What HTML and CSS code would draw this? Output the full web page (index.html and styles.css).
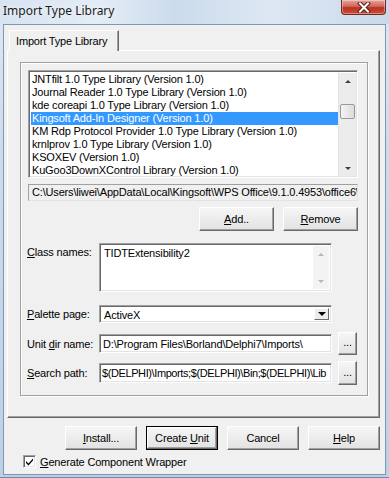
FILE: index.html
```html
<html>

<head>
    <link rel="stylesheet" href="styles.css">
</head>

<body>
    <div class="window">
        <div class="titlebar">
            <span class="title">Import Type Library</span>
            <div class="close">
                <svg width="14" height="11" viewBox="0 0 14 11">
                    <path d="M3 1.5 L11 9.5 M11 1.5 L3 9.5" stroke="#5a1c17" stroke-width="4" stroke-linecap="square" />
                    <path d="M3 1.5 L11 9.5 M11 1.5 L3 9.5" stroke="#ffffff" stroke-width="2" stroke-linecap="square" />
                </svg>
            </div>
        </div>

        <div class="client">
            <div class="tabs">
                <div class="tab">Import Type Library</div>
            </div>

            <div class="panel">
                <div class="group">
                    <div class="listbox">
                        <div class="items">
                            <div class="item">JNTfilt 1.0 Type Library (Version 1.0)</div>
                            <div class="item">Journal Reader 1.0 Type Library (Version 1.0)</div>
                            <div class="item">kde coreapi 1.0 Type Library (Version 1.0)</div>
                            <div class="item selected">Kingsoft Add-In Designer (Version 1.0)</div>
                            <div class="item">KM Rdp Protocol Provider 1.0 Type Library (Version 1.0)</div>
                            <div class="item">krnlprov 1.0 Type Library (Version 1.0)</div>
                            <div class="item">KSOXEV (Version 1.0)</div>
                            <div class="item">KuGoo3DownXControl Library (Version 1.0)</div>
                        </div>
                        <div class="vscroll">
                            <div class="arrow up"></div>
                            <div class="track"><div class="thumb"></div></div>
                            <div class="arrow down"></div>
                        </div>
                    </div>

                    <div class="pathbox">C:\Users\liwei\AppData\Local\Kingsoft\WPS Office\9.1.0.4953\office6\kwpsaddin.dll</div>

                    <div class="btnrow">
                        <div class="button"><span><u>A</u>dd..</span></div>
                        <div class="button"><span><u>R</u>emove</span></div>
                    </div>

                    <div class="row row-class">
                        <div class="label"><u>C</u>lass names:</div>
                        <div class="memo">
                            <div class="memo-text">TIDTExtensibility2</div>
                            <div class="vscroll disabled">
                                <div class="arrow up"></div>
                                <div class="track"></div>
                                <div class="arrow down"></div>
                            </div>
                        </div>
                    </div>

                    <div class="row row-palette">
                        <div class="label"><u>P</u>alette page:</div>
                        <div class="combo">
                            <div class="combo-text">ActiveX</div>
                            <div class="combo-btn"><div class="arrow down"></div></div>
                        </div>
                    </div>

                    <div class="row row-unit">
                        <div class="label">Unit <u>d</u>ir name:</div>
                        <div class="edit">D:\Program Files\Borland\Delphi7\Imports\</div>
                        <div class="button dots"><span>...</span></div>
                    </div>

                    <div class="row row-search">
                        <div class="label"><u>S</u>earch path:</div>
                        <div class="edit">$(DELPHI)\Imports;$(DELPHI)\Bin;$(DELPHI)\Lib</div>
                        <div class="button dots"><span>...</span></div>
                    </div>
                </div>
            </div>

            <div class="actions">
                <div class="button wide"><span><u>I</u>nstall...</span></div>
                <div class="button wide default"><span>Create <u>U</u>nit</span></div>
                <div class="button wide"><span>Cancel</span></div>
                <div class="button wide"><span><u>H</u>elp</span></div>
            </div>

            <div class="check">
                <div class="checkbox">
                    <svg width="9" height="9" viewBox="0 0 9 9">
                        <path d="M1 4 L3.5 6.5 L8 1.5 L8 3.5 L3.5 8.5 L1 6 Z" fill="#000" />
                    </svg>
                </div>
                <span><u>G</u>enerate Component Wrapper</span>
            </div>
        </div>
    </div>
</body>

</html>
```

FILE: styles.css
```css
body {
    margin: 0;
    background: #bfd2e8;
    font-family: "Liberation Sans", Arial, sans-serif;
    font-size: 11px;
    letter-spacing: -0.17px;
    color: #000;
}

.window {
    width: 389px;
    height: 478px;
    box-sizing: border-box;
    padding: 0 3px 3px 3px;
    background: linear-gradient(180deg, #dce8f4 0%, #cddced 30%, #bcd0e6 100%);
    border-bottom: 1px solid #6f8aa8;
    overflow: hidden;
}

/* title bar */

.titlebar {
    height: 24px;
    display: flex;
    align-items: flex-start;
    justify-content: space-between;
    margin: 0 -3px;
    background: linear-gradient(90deg, #d6e3f1 0%, #e4edf6 25%, #cbdbec 45%, #dde8f3 70%, #c9d9eb 100%);
}

.title {
    font-family: "Noto Sans", "Open Sans", sans-serif;
    font-size: 12px;
    letter-spacing: 0;
    color: #1b1b1b;
    margin: 2px 0 0 3px;
    text-shadow: 0 0 6px #ffffff;
}

.close {
    width: 45px;
    height: 15px;
    margin-right: 3px;
    box-sizing: border-box;
    border: 1px solid #6e2a24;
    border-top: none;
    border-radius: 0 0 4px 4px;
    background: linear-gradient(180deg, #e6a59a 0%, #d0675a 45%, #b83222 55%, #d14c36 100%);
    box-shadow: inset 0 0 0 1px rgba(255, 255, 255, 0.35);
    display: flex;
    align-items: center;
    justify-content: center;
}

/* client */

.client {
    height: 451px;
    box-sizing: border-box;
    background: #f0f0f0;
    border: 1px solid #8197b0;
    padding: 5px 5px 0 3px;
}

.tabs {
    display: flex;
    height: 20px;
}

.tab {
    margin-left: 2px;
    width: 110px;
    height: 21px;
    box-sizing: border-box;
    padding: 4px 0 0 6px;
    background: #f0f0f0;
    border-top: 1px solid #ffffff;
    border-left: 1px solid #ffffff;
    border-right: 1px solid #696969;
    box-shadow: inset -1px 0 0 #a0a0a0;
    position: relative;
    z-index: 1;
    white-space: nowrap;
}

.panel {
    width: 373px;
    height: 368px;
    box-sizing: border-box;
    border-top: 1px solid #ffffff;
    border-left: 1px solid #ffffff;
    border-right: 1px solid #696969;
    border-bottom: 1px solid #696969;
    box-shadow: inset -1px -1px 0 #a0a0a0;
    padding: 11px 0 0 12px;
}

.group {
    width: 348px;
    height: 334px;
    box-sizing: border-box;
    border: 1px solid #a0a0a0;
    box-shadow: inset 1px 1px 0 #ffffff, 1px 1px 0 #ffffff;
    padding: 7px 9px 0 7px;
}

/* sunken controls */

.listbox,
.memo,
.combo,
.edit {
    box-sizing: border-box;
    background: #ffffff;
    border-top: 1px solid #a0a0a0;
    border-left: 1px solid #a0a0a0;
    border-right: 1px solid #ffffff;
    border-bottom: 1px solid #ffffff;
    box-shadow: inset 1px 1px 0 #696969, inset -1px -1px 0 #e3e3e3;
}

.listbox {
    height: 108px;
    display: flex;
    padding: 2px 1px 1px 2px;
}

.items {
    flex: 1;
    overflow: hidden;
}

.item {
    height: 13px;
    line-height: 13px;
    padding-left: 1px;
    white-space: nowrap;
}

.item.selected {
    background: #3399ff;
    color: #ffffff;
}

.vscroll {
    width: 17px;
    display: flex;
    flex-direction: column;
    background: #ececec;
    border-left: 1px solid #e4e4e4;
}

.vscroll .arrow {
    height: 16px;
    display: flex;
    align-items: center;
    justify-content: center;
}

.arrow::before {
    content: "";
    display: block;
    width: 0;
    height: 0;
    border-left: 3px solid transparent;
    border-right: 3px solid transparent;
}

.arrow.up::before {
    border-bottom: 3px solid #404040;
}

.arrow.down::before {
    border-top: 3px solid #404040;
}

.vscroll.disabled .arrow.up::before {
    border-bottom-color: #b8b8b8;
}

.vscroll.disabled .arrow.down::before {
    border-top-color: #b8b8b8;
}

.vscroll .track {
    flex: 1;
}

.thumb {
    margin: 15px 0 0 1px;
    width: 15px;
    height: 15px;
    box-sizing: border-box;
    border: 1px solid #9a9a9a;
    border-radius: 2px;
    background: linear-gradient(90deg, #f4f4f4, #dcdcdc);
}

.pathbox {
    margin-top: 6px;
    height: 17px;
    line-height: 15px;
    box-sizing: border-box;
    border: 1px solid #a0a0a0;
    border-right-color: #e3e3e3;
    border-bottom-color: #e3e3e3;
    padding-left: 3px;
    white-space: nowrap;
    overflow: hidden;
}

/* buttons */

.button {
    box-sizing: border-box;
    height: 24px;
    display: flex;
    align-items: center;
    justify-content: center;
    background: linear-gradient(180deg, #f6f6f6 0%, #ececec 50%, #e2e2e2 100%);
    border-top: 1px solid #ffffff;
    border-left: 1px solid #ffffff;
    border-right: 1px solid #696969;
    border-bottom: 1px solid #696969;
    box-shadow: inset -1px -1px 0 #a0a0a0;
    white-space: nowrap;
}

.btnrow {
    margin-top: 6px;
    display: flex;
    justify-content: flex-end;
    gap: 9px;
}

.btnrow .button {
    width: 75px;
}

/* labelled rows */

.row {
    display: flex;
    align-items: center;
}

.label {
    width: 72px;
    margin-left: -1px;
    flex-shrink: 0;
    white-space: nowrap;
}

.row-class {
    margin-top: 12px;
    align-items: flex-start;
}

.row-class .label {
    padding-top: 3px;
}

.memo {
    width: 233px;
    height: 49px;
    display: flex;
    padding: 2px;
}

.memo-text {
    flex: 1;
    padding: 1px 0 0 2px;
}

.memo .vscroll {
    width: 16px;
    background: #f3f3f3;
    border-left: none;
}

.row-palette {
    margin-top: 13px;
}

.combo {
    width: 233px;
    height: 18px;
    display: flex;
    padding: 2px;
}

.combo-text {
    flex: 1;
    line-height: 14px;
    padding-left: 2px;
}

.combo-btn {
    width: 15px;
    box-sizing: border-box;
    display: flex;
    align-items: center;
    justify-content: center;
    background: #ececec;
    border-top: 1px solid #ffffff;
    border-left: 1px solid #ffffff;
    border-right: 1px solid #696969;
    border-bottom: 1px solid #696969;
}

.combo-btn .arrow.down::before {
    border-left-width: 4px;
    border-right-width: 4px;
    border-top: 4px solid #000000;
}

.row-unit {
    margin-top: 9px;
    height: 23px;
}

.row-search {
    margin-top: 6px;
    height: 24px;
}

.edit {
    width: 233px;
    height: 19px;
    line-height: 15px;
    padding: 2px 0 0 3px;
    white-space: nowrap;
    overflow: hidden;
}

.row-search .edit {
    height: 20px;
    padding-left: 2px;
    letter-spacing: -0.4px;
}

.button.dots {
    width: 19px;
    height: 23px;
    margin-left: 6px;
    padding-bottom: 3px;
}

.row-search .button.dots {
    height: 24px;
}

/* bottom area */

.actions {
    margin-top: 8px;
    display: flex;
    justify-content: flex-end;
    gap: 9px;
}

.button.wide {
    width: 72px;
}

.button.default {
    border: 1px solid #000000;
    box-shadow: inset -1px -1px 0 #696969, inset 1px 1px 0 #ffffff, inset -2px -2px 0 #a0a0a0;
}

.check {
    margin: 5px 0 0 16px;
    display: flex;
    align-items: center;
    height: 13px;
}

.checkbox {
    width: 13px;
    height: 13px;
    box-sizing: border-box;
    background: #ffffff;
    border-top: 1px solid #a0a0a0;
    border-left: 1px solid #a0a0a0;
    border-right: 1px solid #ffffff;
    border-bottom: 1px solid #ffffff;
    box-shadow: inset 1px 1px 0 #696969, inset -1px -1px 0 #e3e3e3;
    display: flex;
    align-items: center;
    justify-content: center;
    margin-right: 4px;
}
```
